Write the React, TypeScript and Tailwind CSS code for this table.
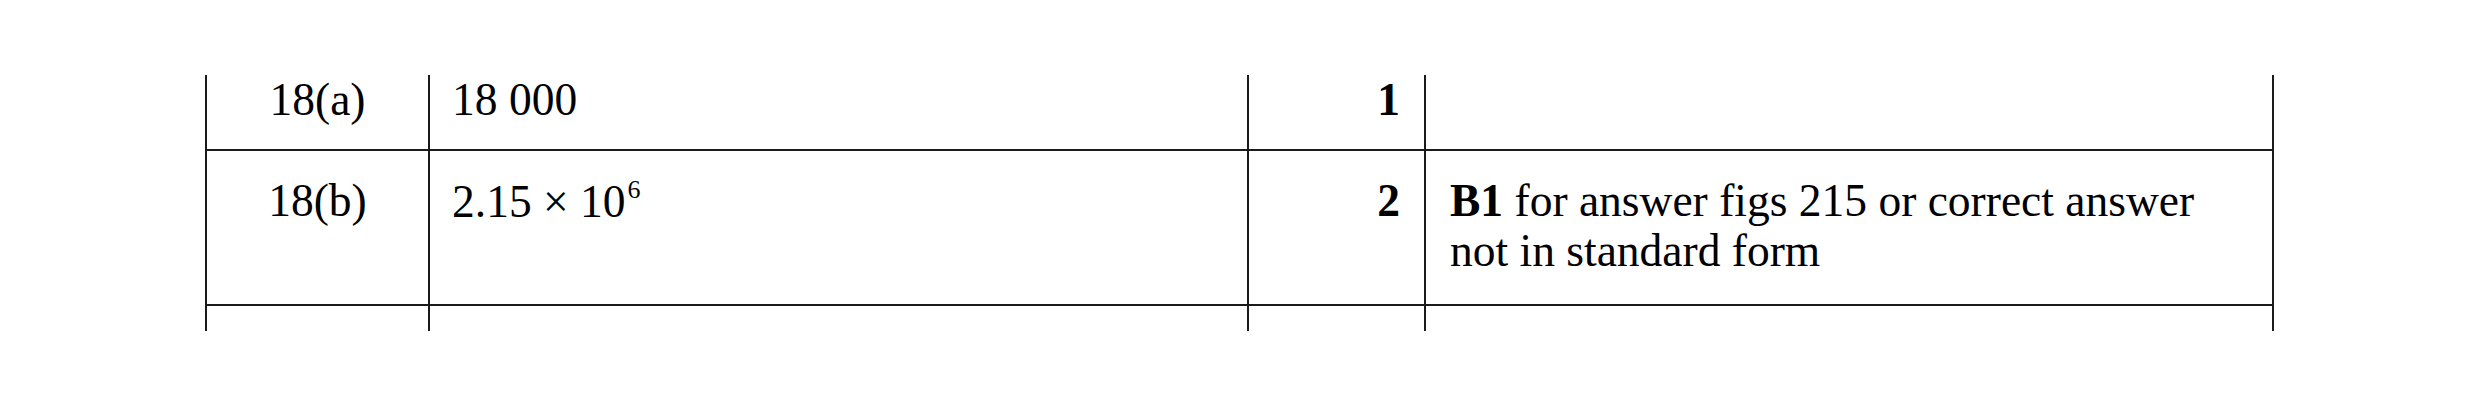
import React from "react";

const cell = "border-l-2 border-[#1a1a1a]";

export default function App() {
  return (
    <div
      className="w-[2480px] h-[407px] bg-white pt-[75px] pl-[205px] text-black"
      style={{ fontFamily: '"Liberation Serif", "Times New Roman", serif' }}
    >
      <div className="w-[2069px] text-[45.5px] leading-[50px]">
        {/* Row 18(a) */}
        <div className="grid grid-cols-[223px_819px_177px_850px] h-[76px] border-b-2 border-[#1a1a1a]">
          <div className={`${cell} text-center`}>18(a)</div>
          <div className={`${cell} pl-[22px]`}>18 000</div>
          <div className={`${cell} pr-[24px] text-right font-bold`}>1</div>
          <div className={`${cell} border-r-2`}></div>
        </div>
        {/* Row 18(b) */}
        <div className="grid grid-cols-[223px_819px_177px_850px] h-[155px] border-b-2 border-[#1a1a1a]">
          <div className={`${cell} pt-[25px] text-center`}>18(b)</div>
          <div className={`${cell} pt-[26px] pl-[22px]`}>
            2.15 × 10
            <sup className="text-[26px] top-[-19px] ml-[2px]">6</sup>
          </div>
          <div className={`${cell} pt-[25px] pr-[24px] text-right font-bold`}>2</div>
          <div className={`${cell} border-r-2 pt-[25px] pl-[24px] pr-[24px]`}>
            <span className="font-bold">B1</span> for answer figs 215 or correct answer not in standard form
          </div>
        </div>
        {/* Partial next row */}
        <div className="grid grid-cols-[223px_819px_177px_850px] h-[25px]">
          <div className={cell}></div>
          <div className={cell}></div>
          <div className={cell}></div>
          <div className={`${cell} border-r-2`}></div>
        </div>
      </div>
    </div>
  );
}
